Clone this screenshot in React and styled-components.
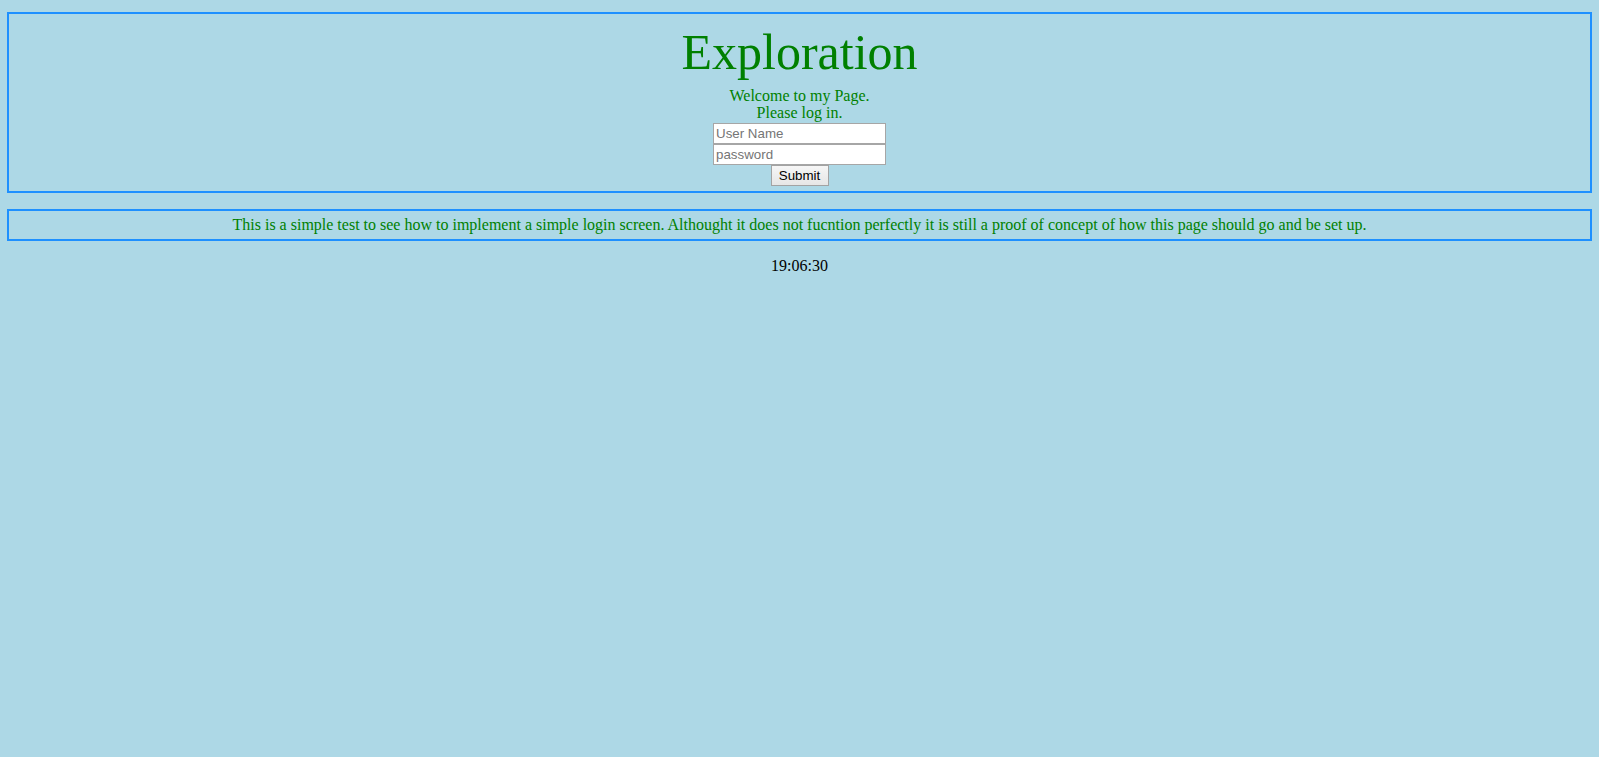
import React from "react";
import styled, { createGlobalStyle } from "styled-components";

const GlobalStyle = createGlobalStyle`
  html, body {
    margin: 0;
    padding: 0;
    background: #add8e6;
    font-family: "Liberation Serif", "Times New Roman", serif;
    font-size: 16px;
  }
`;

const Page = styled.div`
  padding: 12px 7px 0;
`;

const Panel = styled.div`
  border: 2px solid #1e90ff;
  color: green;
  text-align: center;
  padding: ${(p) => p.$pad};
  margin-bottom: ${(p) => p.$gap || "0"};
`;

const Title = styled.h1`
  margin: 0 0 6px;
  font-size: 50px;
  font-weight: normal;
  line-height: 57px;
`;

const Line = styled.div`
  line-height: ${(p) => p.$lh || "18px"};
`;

const Form = styled.form`
  display: flex;
  flex-direction: column;
  align-items: center;
  margin-top: 2px;
`;

const Field = styled.input`
  box-sizing: border-box;
  width: 173px;
  height: 21px;
  margin: 0;
  padding: 1px 2px;
  border: 1px solid #a6a6a6;
  background: #fff;
  font-family: "Liberation Sans", Arial, sans-serif;
  font-size: 13.33px;
  color: #000;
  outline: none;

  &::placeholder {
    color: #757575;
  }
`;

const Button = styled.button`
  box-sizing: border-box;
  height: 21px;
  width: 58px;
  margin: 0;
  padding: 1px 6px;
  border: 1px solid #a3a3a3;
  border-radius: 0;
  background: linear-gradient(#f6f6f6, #e6e6e6);
  font-family: "Liberation Sans", Arial, sans-serif;
  font-size: 13.33px;
  color: #000;
`;

const Clock = styled.div`
  margin-top: 16px;
  text-align: center;
  color: #000;
  line-height: 18px;
`;

export default function App() {
  return (
    <>
      <GlobalStyle />
      <Page>
        <Panel $pad="10px 0 5px" $gap="16px">
          <Title>Exploration</Title>
          <Line $lh="17px">Welcome to my Page.</Line>
          <Line $lh="17px">Please log in.</Line>
          <Form onSubmit={(e) => e.preventDefault()}>
            <Field type="text" placeholder="User Name" />
            <Field type="password" placeholder="password" />
            <Button type="submit">Submit</Button>
          </Form>
        </Panel>
        <Panel $pad="5px 0 5px">
          <Line>
            This is a simple test to see how to implement a simple login screen. Althought it does not fucntion perfectly it is still a proof of concept of how this page should go and be set up.
          </Line>
        </Panel>
        <Clock>19:06:30</Clock>
      </Page>
    </>
  );
}
